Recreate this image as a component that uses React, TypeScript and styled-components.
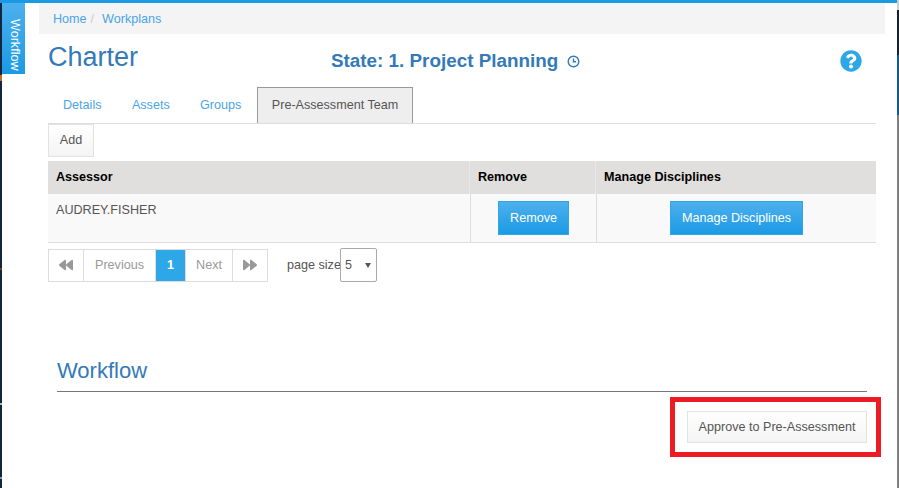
import styled, { createGlobalStyle } from "styled-components";
import { FaBackward, FaForward, FaQuestionCircle } from "react-icons/fa";

const GlobalStyle = createGlobalStyle`
  html, body {
    margin: 0;
    padding: 0;
    background: #fff;
  }
  * {
    box-sizing: border-box;
  }
`;

const Page = styled.div`
  width: 899px;
  height: 488px;
  overflow: hidden;
  display: flex;
  font-family: "Liberation Sans", Arial, sans-serif;
  font-size: 12.6px;
  color: #555;
`;
const Window = styled.div`
  flex: 1;
  min-width: 0;
  display: flex;
  flex-direction: column;
`;
const TopBar = styled.div`
  height: 3px;
  flex: none;
  background: #1b9ae4;
`;
const Body = styled.div`
  flex: 1;
  display: flex;
`;
// the desktop showing behind the window on both sides
const LeftEdge = styled.div`
  width: 2px;
  flex: none;
  background: linear-gradient(
    #12263f 0 72px,
    #b8702a 72px 78px,
    #12263f 78px 265px,
    #7a3a2a 265px 267px,
    #12263f 267px 400px,
    #9fc79a 400px 402px,
    #12263f 402px 474px,
    #8a8ac8 474px 476px,
    #12263f 476px
  );
`;
const RightEdge = styled.div`
  width: 2px;
  flex: none;
  background: linear-gradient(
    #d0d0d0 0 10px,
    #17202c 10px 55px,
    #1a5a8a 55px 115px,
    #808080 115px
  );
`;
const SideColumn = styled.div`
  width: 23px;
  flex: none;
`;
const SideTab = styled.div`
  width: 23px;
  height: 71px;
  background: linear-gradient(#4db0ee, #1b9ae4);
  color: #fff;
  writing-mode: vertical-rl;
  display: flex;
  align-items: center;
  justify-content: flex-end;
  padding-bottom: 3px;
  padding-left: 3px;
`;
const Main = styled.div`
  flex: 1;
  margin: 0 12px 0 14px;
  min-width: 0;
`;
const Breadcrumb = styled.div`
  height: 31px;
  background: #f4f4f4;
  display: flex;
  align-items: center;
  padding-left: 14px;
  color: #ccc;
`;
const Crumb = styled.a`
  color: #4aa5e8;
`;
const Sep = styled.span`
  margin: 0 8px 0 4px;
`;
const Content = styled.div`
  padding: 0 9px;
`;
const TitleRow = styled.div`
  height: 53px;
  display: flex;
  align-items: center;
  color: #337ab7;
`;
const Title = styled.h1`
  margin: 0 0 6px;
  width: 283px;
  font-size: 27px;
  font-weight: 400;
`;
const State = styled.h2`
  margin: 1px 0 0;
  font-size: 18.85px;
  font-weight: 700;
  display: flex;
  align-items: center;
  gap: 9px;
`;
const Help = styled.div`
  margin-left: auto;
  margin-right: 14px;
  display: flex;
  color: #2ea7e8;
  font-size: 22px;
`;
const Tabs = styled.div`
  height: 37px;
  display: flex;
  border-bottom: 1px solid #ddd;
`;
const Tab = styled.div<{ $active?: boolean }>`
  height: 36px;
  padding: 0 ${(p) => (p.$active ? "14px" : "15px")} 1px;
  margin-right: 0.4px;
  display: flex;
  align-items: center;
  color: ${(p) => (p.$active ? "#555" : "#4aa5e8")};
  background: ${(p) => (p.$active ? "#eee" : "transparent")};
  border: ${(p) => (p.$active ? "1px solid #999" : "none")};
  border-bottom: none;
`;
const DefaultButton = styled.button`
  font: inherit;
  color: #555;
  background: linear-gradient(#fff, #f4f4f4);
  border: 1px solid #e2e2e2;
  padding: 0;
  display: block;
`;
const AddButton = styled(DefaultButton)`
  width: 46px;
  height: 33px;
  padding-bottom: 2px;
`;
const Table = styled.div`
  margin-top: 4px;
  display: grid;
  grid-template-columns: 422px 126px 280px;
`;
const HeadCell = styled.div`
  height: 33px;
  background: #e0dfdd;
  color: #000;
  font-weight: 700;
  padding: 0 8px 2px;
  display: flex;
  align-items: center;
  border-right: 1px solid #e8e8e6;
  &:nth-child(3) {
    border-right: none;
  }
`;
const Cell = styled.div<{ $center?: boolean }>`
  height: 49px;
  background: #f9f9f9;
  border-bottom: 1px solid #ddd;
  border-left: ${(p) => (p.$center ? "1px solid #ddd" : "none")};
  display: flex;
  padding: ${(p) => (p.$center ? "7px 0 0" : "9px 8px 0")};
  justify-content: ${(p) => (p.$center ? "center" : "flex-start")};
  align-items: flex-start;
`;
const PrimaryButton = styled.button`
  height: 34px;
  padding: 0 11px;
  font: inherit;
  color: #fff;
  border: 1px solid #2ea7e8;
  background: linear-gradient(#4db0ee, #1b9ae4);
`;
const PagerRow = styled.div`
  margin-top: 5px;
  display: flex;
  align-items: center;
`;
const Pager = styled.div`
  height: 33px;
  margin-top: 1px;
  display: flex;
  border: 1px solid #ddd;
`;
const PageItem = styled.div<{ $width: number; $active?: boolean }>`
  width: ${(p) => p.$width}px;
  padding-bottom: 2px;
  display: flex;
  align-items: center;
  justify-content: center;
  font-size: ${(p) => (p.$width < 36 && !p.$active ? "14px" : "inherit")};
  color: ${(p) => (p.$active ? "#fff" : "#999")};
  font-weight: ${(p) => (p.$active ? 700 : 400)};
  background: ${(p) => (p.$active ? "#2ea7e8" : "#fff")};
  border-right: 1px solid #ddd;
  &:last-child {
    border-right: none;
  }
`;
const PageSizeLabel = styled.span`
  margin-left: 19px;
`;
const PageSize = styled.div`
  width: 37px;
  height: 34px;
  margin-left: -1px;
  border: 1px solid #aaa;
  border-radius: 2px;
  display: flex;
  align-items: center;
  justify-content: space-between;
  padding: 0 4px;
  color: #555;
`;
const Caret = styled.span`
  width: 0;
  height: 0;
  border-left: 3px solid transparent;
  border-right: 3px solid transparent;
  border-top: 5px solid #555;
  margin-right: 1px;
`;
const WorkflowSection = styled.section`
  margin: 74px 18px 0;
`;
const WorkflowTitle = styled.h3`
  margin: 0;
  height: 36px;
  border-bottom: 1px solid #777;
  font-size: 22px;
  font-weight: 400;
  color: #337ab7;
  line-height: 30px;
`;
const Actions = styled.div`
  display: flex;
  justify-content: flex-end;
  margin-right: -14px;
  margin-top: 5px;
`;
const Highlight = styled.div`
  border: 5px solid #ed1c24;
  padding: 9px 9px 9px 12px;
`;
const ApproveButton = styled(DefaultButton)`
  width: 180px;
  height: 32px;
`;

function ClockIcon() {
  return (
    <svg width="13" height="13" viewBox="0 0 13 13" fill="none" stroke="currentColor" strokeWidth="1.4">
      <circle cx="6.5" cy="6.5" r="5.3" />
      <path d="M6.5 3.5V6.8H9" />
    </svg>
  );
}

export default function App() {
  return (
    <Page>
      <GlobalStyle />
      <Window>
        <TopBar />
        <Body>
          <LeftEdge />
          <SideColumn>
            <SideTab>Workflow</SideTab>
          </SideColumn>
          <Main>
            <Breadcrumb>
              <Crumb>Home</Crumb>
              <Sep>/</Sep>
              <Crumb>Workplans</Crumb>
            </Breadcrumb>
            <Content>
              <TitleRow>
                <Title>Charter</Title>
                <State>
                  State: 1. Project Planning <ClockIcon />
                </State>
                <Help>
                  <FaQuestionCircle />
                </Help>
              </TitleRow>
              <Tabs>
                <Tab>Details</Tab>
                <Tab>Assets</Tab>
                <Tab>Groups</Tab>
                <Tab $active>Pre-Assessment Team</Tab>
              </Tabs>
              <AddButton>Add</AddButton>
              <Table>
                <HeadCell>Assessor</HeadCell>
                <HeadCell>Remove</HeadCell>
                <HeadCell>Manage Disciplines</HeadCell>
                <Cell>AUDREY.FISHER</Cell>
                <Cell $center>
                  <PrimaryButton>Remove</PrimaryButton>
                </Cell>
                <Cell $center>
                  <PrimaryButton>Manage Disciplines</PrimaryButton>
                </Cell>
              </Table>
              <PagerRow>
                <Pager>
                  <PageItem $width={35}>
                    <FaBackward />
                  </PageItem>
                  <PageItem $width={72}>Previous</PageItem>
                  <PageItem $width={30} $active>
                    1
                  </PageItem>
                  <PageItem $width={47}>Next</PageItem>
                  <PageItem $width={34}>
                    <FaForward />
                  </PageItem>
                </Pager>
                <PageSizeLabel>page size</PageSizeLabel>
                <PageSize>
                  5 <Caret />
                </PageSize>
              </PagerRow>
            </Content>
            <WorkflowSection>
              <WorkflowTitle>Workflow</WorkflowTitle>
              <Actions>
                <Highlight>
                  <ApproveButton>Approve to Pre-Assessment</ApproveButton>
                </Highlight>
              </Actions>
            </WorkflowSection>
          </Main>
        </Body>
      </Window>
      <RightEdge />
    </Page>
  );
}
